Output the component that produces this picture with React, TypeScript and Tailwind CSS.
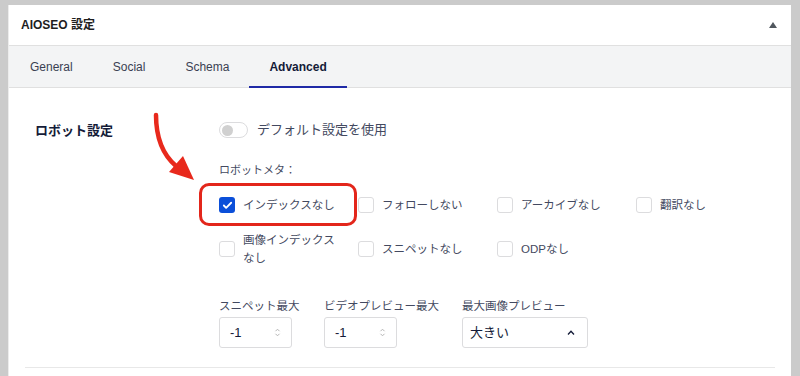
import { Check } from 'lucide-react'

const font = { fontFamily: '"Liberation Sans", "Noto Sans CJK JP", sans-serif' }

const robots = [
  { label: 'インデックスなし', checked: true },
  { label: 'フォローしない', checked: false },
  { label: 'アーカイブなし', checked: false },
  { label: '翻訳なし', checked: false },
  { label: '画像インデックスなし', checked: false },
  { label: 'スニペットなし', checked: false },
  { label: 'ODPなし', checked: false },
]

function Checkbox({ checked }: { checked: boolean }) {
  return checked ? (
    <span className="w-[16px] h-[16px] shrink-0 rounded-[3px] bg-[#0b4fd9] flex items-center justify-center">
      <Check className="w-[11px] h-[11px] text-white" strokeWidth={4} />
    </span>
  ) : (
    <span className="w-[16px] h-[16px] shrink-0 rounded-[3px] border border-[#dcdcde] bg-white" />
  )
}

function Spinner() {
  return (
    <svg width="7" height="9" viewBox="0 0 7 9" className="text-[#b5b5b5]">
      <path d="M1.5 3.2 L3.5 1.2 L5.5 3.2" fill="none" stroke="currentColor" strokeWidth="1" />
      <path d="M1.5 5.8 L3.5 7.8 L5.5 5.8" fill="none" stroke="currentColor" strokeWidth="1" />
    </svg>
  )
}

export default function App() {
  return (
    <div className="relative w-[800px] h-[376px] overflow-hidden bg-[#cbcbcb] pt-[5px] pl-[8px] pr-[9px]" style={font}>
      <div className="bg-white h-[371px] border-l border-[#ececec]">
        {/* Header */}
        <div className="h-[41px] flex items-center justify-between pl-[12px] pr-[14px] border-b border-[#e0e0e0]">
          <span className="text-[12px] font-semibold text-[#1e1e1e]">AIOSEO 設定</span>
          <svg width="8" height="6" viewBox="0 0 8 6">
            <path d="M0 6 L4 0 L8 6 Z" fill="#50575e" />
          </svg>
        </div>

        {/* Tabs */}
        <div className="h-[42px] bg-[#f3f4f5] border-b border-[#e0e0e0] flex pl-[1px]">
          {['General', 'Social', 'Schema', 'Advanced'].map((tab) => (
            <div
              key={tab}
              className={`px-[20px] flex items-center text-[12px] ${
                tab === 'Advanced'
                  ? 'font-bold text-[#141b38] border-b-2 border-[#1f2aa6] -mb-px pt-[2px]'
                  : 'text-[#3a3f52]'
              }`}
            >
              {tab}
            </div>
          ))}
        </div>

        {/* Robots setting row */}
        <div className="mx-[16px] flex border-b border-[#e8e8e8] pt-[34px] pb-[19px]">
          <div className="w-[195px] pl-[10px] text-[13px] font-bold text-[#141b38] leading-[16px] pt-[1px]">
            ロボット設定
          </div>
          <div className="flex-1 pl-[1px]">
            <div className="flex items-center gap-[9px] h-[16px]">
              <span className="w-[29px] h-[16px] rounded-full border border-[#dcdcde] bg-white flex items-center pl-[2px]">
                <span className="w-[11px] h-[11px] rounded-full bg-[#d0d0d0]" />
              </span>
              <span className="text-[13px] text-[#434960]">デフォルト設定を使用</span>
            </div>

            <div className="mt-[24px] text-[11px] leading-[16px] text-[#434960]">ロボットメタ：</div>

            <div className="mt-[18px] grid grid-cols-[139px_139px_139px_139px] gap-y-[17px]">
              {robots.map((r) => (
                <div key={r.label} className="flex items-center gap-[8px] min-h-[18px]">
                  <Checkbox checked={r.checked} />
                  <span className="w-[96px] text-[11.5px] leading-[18px] text-[#434960]">{r.label}</span>
                </div>
              ))}
            </div>

            <div className="mt-[31px] flex">
              <div className="w-[105px]">
                <div className="text-[11.5px] leading-[16px] text-[#434960] mb-[3px]">スニペット最大</div>
                <div className="w-[73px] h-[31px] border border-[#dcdcde] rounded-[3px] flex items-center justify-between pl-[10px] pr-[10px]">
                  <span className="text-[13px] text-[#141b38]">-1</span>
                  <Spinner />
                </div>
              </div>
              <div className="w-[138px]">
                <div className="text-[11.5px] leading-[16px] text-[#434960] mb-[3px]">ビデオプレビュー最大</div>
                <div className="w-[73px] h-[31px] border border-[#dcdcde] rounded-[3px] flex items-center justify-between pl-[10px] pr-[10px]">
                  <span className="text-[13px] text-[#141b38]">-1</span>
                  <Spinner />
                </div>
              </div>
              <div>
                <div className="text-[11.5px] leading-[16px] text-[#434960] mb-[3px]">最大画像プレビュー</div>
                <div className="w-[126px] h-[31px] border border-[#dcdcde] rounded-[3px] flex items-center justify-between pl-[7px] pr-[12px]">
                  <span className="text-[13px] text-[#141b38]">大きい</span>
                  <svg width="8" height="5" viewBox="0 0 8 5">
                    <path d="M1 4.5 L4 1.2 L7 4.5" fill="none" stroke="#141b38" strokeWidth="1.3" />
                  </svg>
                </div>
              </div>
            </div>
          </div>
        </div>
      </div>

      {/* Annotation: red box and arrow */}
      <div className="absolute left-[199px] top-[183px] w-[158px] h-[43px] border-[3px] border-[#e3261b] rounded-[10px] pointer-events-none" />
      <svg className="absolute left-0 top-0 pointer-events-none" width="800" height="376">
        <path d="M156 115 C156 138 162 154 176 166" fill="none" stroke="#e8291c" strokeWidth="4.5" strokeLinecap="round" />
        <path d="M183 156 L169 172 L194 180 Z" fill="#e8291c" />
      </svg>
    </div>
  )
}
